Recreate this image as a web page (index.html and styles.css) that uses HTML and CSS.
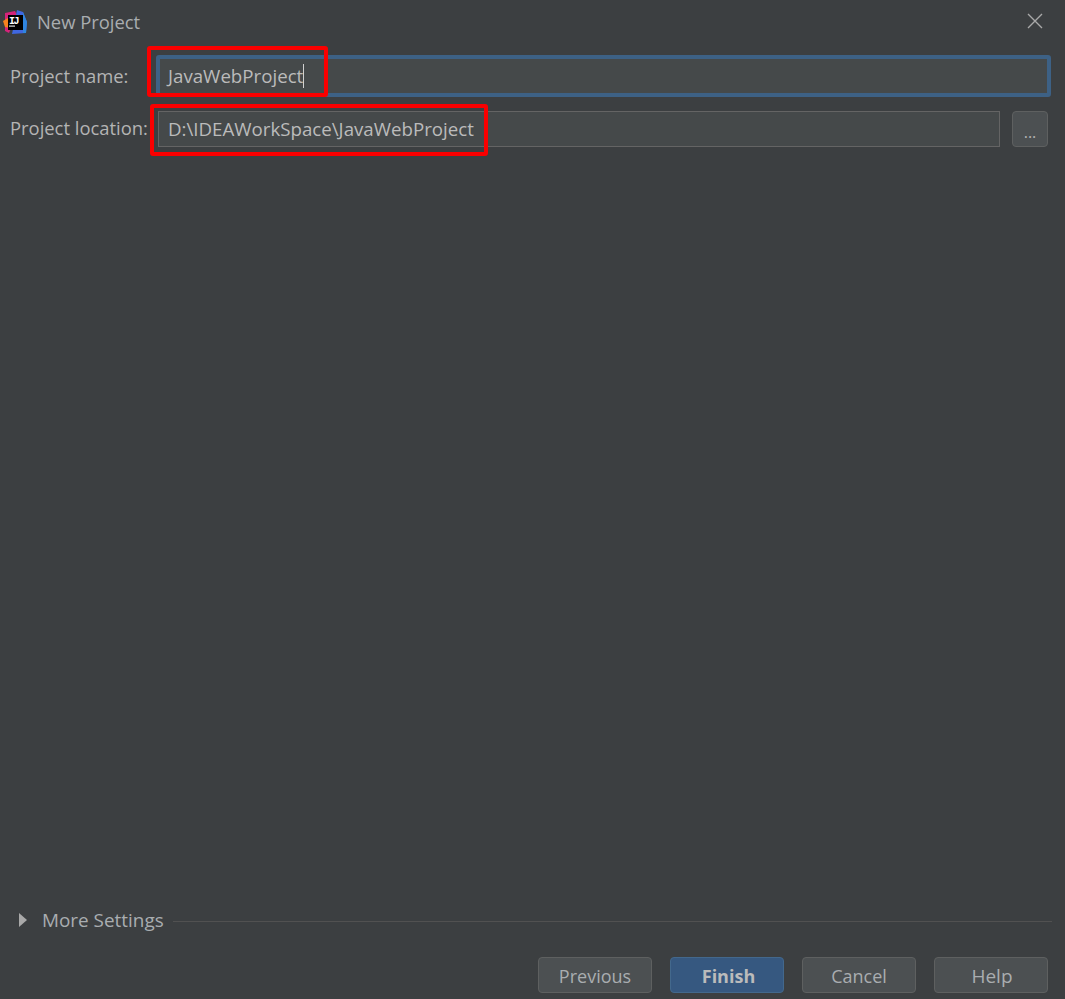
FILE: index.html
```html
<!DOCTYPE html>
<html lang="en">
<head>
<meta charset="utf-8">
<title>New Project</title>
<link rel="stylesheet" href="styles.css">
</head>
<body>
<div class="dialog">
  <header class="titlebar">
    <svg class="logo" width="24" height="24" viewBox="0 0 24 24">
      <path d="M2 3 L12 1 L14 5 L6 23 L2 21 Z" fill="#d4237a"/>
      <path d="M0 11 L5 8 L7 18 L2 17 Z" fill="#f7821e"/>
      <path d="M14 0 L20 2 L24 12 L23 23 L9 24 Z" fill="#3f67e0"/>
      <path d="M20 2 L24 12 L23 23 L20 23 Z" fill="#2f86e0"/>
      <rect x="5" y="5" width="15" height="15" fill="#000"/>
      <text class="logo-text" x="6" y="13.5">IJ</text>
      <rect class="logo-bar" x="6" y="15.5" width="6" height="1.2"/>
    </svg>
    <span class="title">New Project</span>
    <svg class="close" width="16" height="16" viewBox="0 0 16 16">
      <path d="M1 1 L15 15 M15 1 L1 15" stroke="#a9a9a9" stroke-width="1.4" fill="none"/>
    </svg>
  </header>

  <div class="form">
    <div class="row row-name">
      <label class="label">Project name:</label>
      <div class="input input-focus"><span class="value">JavaWebProject</span><i class="caret"></i></div>
    </div>
    <div class="row row-location">
      <label class="label label-location">Project location:</label>
      <div class="input input-plain"><span class="value">D:\IDEAWorkSpace\JavaWebProject</span></div>
      <button class="btn btn-browse">...</button>
    </div>
  </div>

  <div class="spacer"></div>

  <div class="more">
    <svg class="arrow" width="8" height="14" viewBox="0 0 8 14"><path d="M0 0 L8 7 L0 14 Z" fill="#a9a9a9"/></svg>
    <span class="more-text">More Settings</span>
    <div class="rule"></div>
  </div>

  <footer class="footer">
    <button class="btn btn-main">Previous</button>
    <button class="btn btn-main btn-primary">Finish</button>
    <button class="btn btn-main btn-cancel">Cancel</button>
    <button class="btn btn-main btn-help">Help</button>
  </footer>

  <div class="mark mark-name"></div>
  <div class="mark mark-location"></div>
</div>
</body>
</html>
```

FILE: styles.css
```css
html, body {
  margin: 0;
  height: 100%;
  background: #3c3f41;
}
body {
  font-family: "Open Sans", "Noto Sans", "Liberation Sans", sans-serif;
  color: #b4b4b4;
  font-size: 18.4px;
  overflow: hidden;
}
.dialog {
  position: relative;
  height: 999px;
  display: flex;
  flex-direction: column;
}
.titlebar {
  height: 44px;
  display: flex;
  align-items: center;
  padding: 0 22px 0 3px;
  flex: none;
}
.logo { flex: none; }
.logo-text {
  font-family: "Liberation Mono", monospace;
  font-size: 10px;
  font-weight: 700;
  letter-spacing: -1.5px;
  fill: #fff;
}
.logo-bar { fill: #ddd; }
.title {
  margin-left: 10px;
  color: #a9adb0;
  line-height: 44px;
}
.close { margin-left: auto; flex: none; margin-top: -2px; }
.form {
  display: flex;
  flex-direction: column;
  padding: 11px 15px 0 10px;
  flex: none;
}
.row { display: flex; align-items: center; }
.row-name { height: 42px; }
.row-location { height: 36px; margin-top: 14px; }
.label {
  width: 148px;
  flex: none;
  color: #b4b4b4;
  margin-top: -2px;
}
.label-location { margin-top: -4px; }
.input {
  box-sizing: border-box;
  background: #45494a;
  display: flex;
  align-items: center;
  color: #bbbbbb;
  font-size: 18.7px;
}
.value { margin-top: -2px; }
.input-focus {
  flex: 1;
  height: 42px;
  margin: 0 -1px 0 -2px;
  border: 4px solid #3d6185;
  border-radius: 3px;
  padding-left: 8px;
}
.input-plain {
  width: 842px;
  height: 36px;
  border: 1px solid #646464;
  padding-left: 9px;
}
.caret {
  width: 1px;
  height: 24px;
  background: #d0d0d0;
}
.btn {
  box-sizing: border-box;
  font: inherit;
  color: #b4b4b4;
  background: #4c5052;
  border: 1px solid #5e6060;
  border-radius: 4px;
  padding: 0;
}
.btn-browse {
  width: 36px;
  height: 36px;
  margin-left: 12px;
  font-size: 16px;
  padding-top: 5px;
}
.spacer { flex: 1; }
.more {
  display: flex;
  align-items: center;
  height: 26px;
  padding: 0 13px 0 19px;
  flex: none;
}
.arrow { flex: none; }
.more-text {
  margin-left: 15px;
  color: #a9adb0;
  font-size: 18.9px;
}
.rule {
  flex: 1;
  height: 1px;
  background: #515151;
  margin-left: 9px;
  margin-top: 3px;
}
.footer {
  display: flex;
  justify-content: flex-end;
  gap: 18px;
  padding: 24px 17px 6px 0;
  flex: none;
}
.btn-main {
  width: 114px;
  height: 36px;
  color: #a9adb0;
  font-size: 18px;
  padding-top: 2px;
}
.btn-primary {
  background: #365880;
  border-color: #43688c;
  font-weight: 700;
  color: #bbbbbb;
  padding-left: 3px;
}
.btn-help {
  font-size: 19px;
  padding-left: 2px;
}
.mark {
  position: absolute;
  box-sizing: border-box;
  border: 4px solid #fa0000;
  border-radius: 3px;
}
.mark-name { left: 147px; top: 46px; width: 181px; height: 51px; }
.mark-location { left: 150px; top: 104px; width: 338px; height: 52px; }
```
